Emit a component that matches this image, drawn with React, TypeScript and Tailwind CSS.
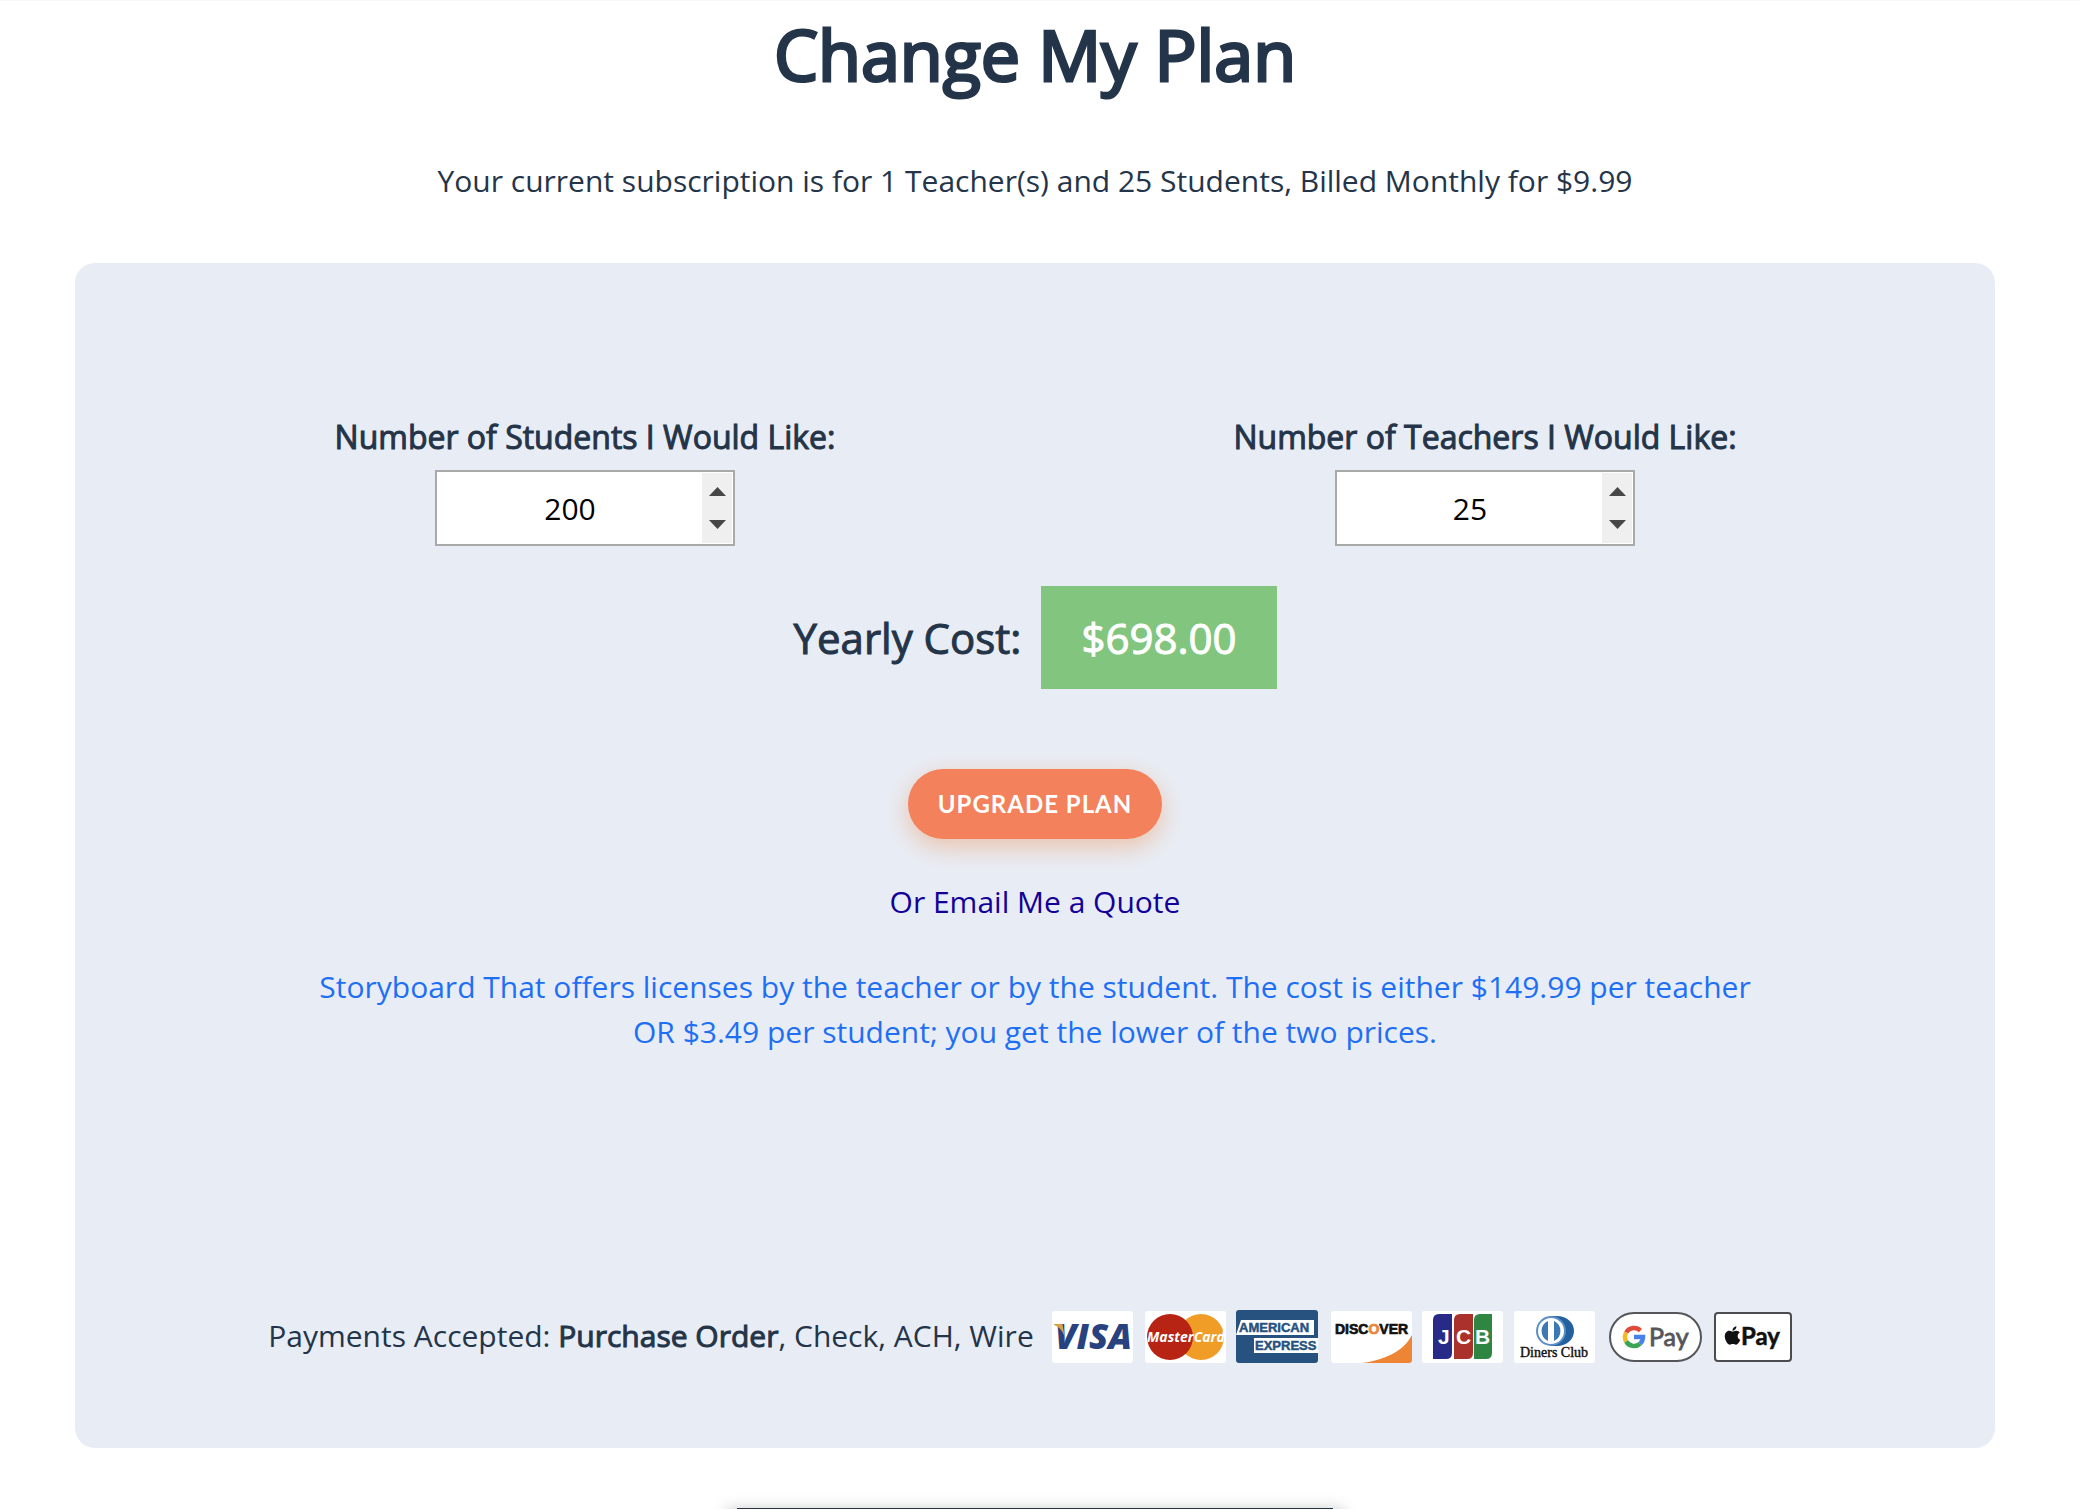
import { useState } from "react"
import { FaApple } from "react-icons/fa"

const STUDENT_PRICE = 3.49
const TEACHER_PRICE = 149.99

/** The plan costs whichever is lower: licensing by student or by teacher */
const getYearlyCost = (students: number, teachers: number) =>
  Math.min(students * STUDENT_PRICE, teachers * TEACHER_PRICE)

const NumberField = ({ id, label, value, onChange }: NumberFieldProps) => (
  <div className="flex flex-1 flex-col items-center">
    <label
      htmlFor={id}
      className="text-[32px] leading-[48px] [-webkit-text-stroke:1px_currentColor]"
    >
      {label}
    </label>
    <div className="mt-[9px] flex h-[76px] w-[300px] border-2 border-[#a9a9a9] bg-white p-px">
      <input
        id={id}
        type="number"
        min={1}
        value={value}
        onChange={e => onChange(Number(e.target.value))}
        className="min-w-0 flex-1 appearance-none bg-transparent text-center text-[30px] text-black outline-none [-moz-appearance:textfield] [&::-webkit-inner-spin-button]:appearance-none"
      />
      <div className="flex w-[30px] flex-col bg-[#efefef]">
        <button
          type="button"
          aria-label="Increase"
          onClick={() => onChange(value + 1)}
          className="flex flex-1 items-end justify-center pb-3"
        >
          <svg width="17" height="9" viewBox="0 0 17 9" fill="#474747">
            <path d="M8.500 0 17 9H0z" />
          </svg>
        </button>
        <button
          type="button"
          aria-label="Decrease"
          onClick={() => onChange(Math.max(1, value - 1))}
          className="flex flex-1 items-start justify-center pt-3"
        >
          <svg width="17" height="9" viewBox="0 0 17 9" fill="#474747">
            <path d="M0 0H17L8.500 9z" />
          </svg>
        </button>
      </div>
    </div>
  </div>
)

const PaymentLogos = () => (
  <div className="flex">
    <svg width="93" height="54" viewBox="0 0 93 54" role="img" aria-label="Visa">
      <rect y="1" width="81" height="52" rx="3" fill="#fff" />
      <text
        x="3"
        y="39"
        fontFamily="Open Sans, sans-serif"
        fontSize="35"
        fontWeight="800"
        fontStyle="italic"
        fill="#27427f"
      >
        VISA
      </text>
      <path d="M2 14h8.500l2 12C10 20 7 17 2 15z" fill="#d9a04a" />
    </svg>
    <svg width="91" height="54" viewBox="0 0 91 54" role="img" aria-label="MasterCard">
      <rect y="1" width="81" height="52" rx="3" fill="#fff" />
      <circle cx="56" cy="27" r="23" fill="#f09d28" />
      <circle cx="25" cy="27" r="23" fill="#b82414" />
      <text
        x="2"
        y="32"
        fontFamily="Open Sans, sans-serif"
        fontSize="14"
        fontWeight="700"
        fontStyle="italic"
        fill="#fff"
      >
        MasterCard
      </text>
    </svg>
    <svg width="95" height="54" viewBox="0 0 95 54" role="img" aria-label="American Express">
      <rect width="82" height="53" rx="3" fill="#27527f" />
      <path d="M5 10H78V25H0z" fill="#fff" />
      <path d="M18 28H82V43H18z" fill="#fff" />
      <g
        fontFamily="Liberation Sans, sans-serif"
        fontSize="13"
        fontWeight="700"
        fill="#27527f"
        stroke="#27527f"
        strokeWidth="0.500"
      >
        <text x="3" y="22">AMERICAN</text>
        <text x="19" y="40">EXPRESS</text>
      </g>
    </svg>
    <svg width="91" height="54" viewBox="0 0 91 54" role="img" aria-label="Discover">
      <rect y="1" width="81" height="52" rx="3" fill="#fff" />
      <path d="M81 25V50Q81 53 78 53H31C53 50 72 42 81 25z" fill="#ed8535" />
      <text
        x="4"
        y="24"
        fontFamily="Liberation Sans, sans-serif"
        fontSize="14"
        fontWeight="700"
        fill="#111"
        stroke="#111"
        strokeWidth="0.700"
      >
        DISC<tspan fill="#ed8535" stroke="#ed8535">O</tspan>VER
      </text>
    </svg>
    <svg width="92" height="54" viewBox="0 0 92 54" role="img" aria-label="JCB">
      <rect y="1" width="81" height="52" rx="3" fill="#fff" />
      <path d="M17 4H30V43Q30 49 24 49H11V10Q11 4 17 4z" fill="#272a86" />
      <path d="M38 4H51V43Q51 49 45 49H32V10Q32 4 38 4z" fill="#ab322c" />
      <path d="M58 4H70V43Q70 49 64 49H52V10Q52 4 58 4z" fill="#2f8643" />
      <g fontFamily="Liberation Sans, sans-serif" fontSize="21" fontWeight="700" fill="#fff">
        <text x="16" y="34">J</text>
        <text x="34" y="34">C</text>
        <text x="53" y="34">B</text>
      </g>
    </svg>
    <svg width="95" height="54" viewBox="0 0 95 54" role="img" aria-label="Diners Club">
      <rect y="1" width="81" height="52" rx="3" fill="#fff" />
      <path d="M37 6H42C66 6 66 36 42 36H37z" fill="#2360a0" />
      <circle cx="37" cy="21" r="14" fill="#fff" stroke="#5b8fc4" strokeWidth="2" />
      <path d="M34 11A11 11 0 0 0 34 31z M40 11A11 11 0 0 1 40 31z" fill="#3c78b5" />
      <text
        x="6"
        y="47"
        fontFamily="Liberation Serif, serif"
        fontSize="14"
        fill="#111"
        stroke="#111"
        strokeWidth="0.400"
      >
        Diners Club
      </text>
    </svg>
    <svg width="105" height="54" viewBox="0 0 105 54" role="img" aria-label="Google Pay">
      <rect x="1" y="3" width="91" height="48" rx="24" fill="#fff" stroke="#55565a" strokeWidth="2" />
      <g fill="none" strokeWidth="4.500">
        <path d="M31.400 20.600A9 9 0 0 0 17.200 22.500" stroke="#e04a3a" />
        <path d="M17.200 22.500A9 9 0 0 0 17.200 31.500" stroke="#f5ba26" />
        <path d="M17.200 31.500A9 9 0 0 0 31 33.700" stroke="#3aa556" />
        <path d="M25 27H34A9 9 0 0 1 31 33.700" stroke="#4a80ec" />
      </g>
      <text
        x="40"
        y="36"
        fontFamily="Lato, sans-serif"
        fontSize="25"
        fill="#55565a"
        stroke="#55565a"
        strokeWidth="0.800"
      >
        Pay
      </text>
    </svg>
    <svg width="78" height="54" viewBox="0 0 78 54" role="img" aria-label="Apple Pay">
      <rect x="1" y="3" width="76" height="48" rx="3" fill="#fff" stroke="#4b4b50" strokeWidth="2" />
      <FaApple size={21} x="8" y="15" color="#111" />
      <text
        x="27"
        y="35"
        fontFamily="Lato, sans-serif"
        fontSize="24"
        fontWeight="700"
        fill="#111"
        stroke="#111"
        strokeWidth="0.500"
      >
        Pay
      </text>
    </svg>
  </div>
)

export default function App() {
  const [students, setStudents] = useState(200)
  const [teachers, setTeachers] = useState(25)

  return (
    <main className="flex flex-col items-center border-t border-[#f8f8f8] bg-white pr-[85px] pl-[75px] font-['Open_Sans',sans-serif] text-[30px] leading-[45px] text-[#243449]">
      <h1 className="mt-[7px] text-[70px] leading-[92px] [-webkit-text-stroke:3px_currentColor]">
        Change My Plan
      </h1>
      <p className="mt-[58px]">
        Your current subscription is for 1 Teacher(s) and 25 Students, Billed Monthly for $9.99
      </p>

      <form
        onSubmit={e => e.preventDefault()}
        className="mt-[60px] flex w-full flex-col items-center rounded-[20px] bg-[#e8edf5] px-[60px] pt-[150px] pb-[84px]"
      >
        <div className="flex w-full">
          <NumberField
            id="students"
            label="Number of Students I Would Like:"
            value={students}
            onChange={setStudents}
          />
          <NumberField
            id="teachers"
            label="Number of Teachers I Would Like:"
            value={teachers}
            onChange={setTeachers}
          />
        </div>

        <div className="mt-10 flex items-center gap-5 text-[42px] leading-[63px] [-webkit-text-stroke:1px_currentColor]">
          <span>Yearly Cost:</span>
          <output className="bg-[#82c57e] px-10 py-5 text-white">
            ${getYearlyCost(students, teachers).toFixed(2)}
          </output>
        </div>

        <button
          type="submit"
          className="mt-20 h-[70px] rounded-full bg-[#f3815b] px-[30px] font-[Lato,sans-serif] text-2xl font-bold tracking-[1px] text-white shadow-[0_8px_24px_rgba(243,129,60,0.4)]"
        >
          UPGRADE PLAN
        </button>
        <a href="#quote" className="mt-10 text-[#120099]">
          Or Email Me a Quote
        </a>
        <p className="mt-10 max-w-[1440px] text-center text-[#1f6ff5]">
          Storyboard That offers licenses by the teacher or by the student. The cost is either
          $149.99 per teacher OR $3.49 per student; you get the lower of the two prices.
        </p>

        <div className="mt-[256px] flex items-center gap-[18px] pr-2.5">
          <p className="pb-1">
            Payments Accepted:{" "}
            <b className="font-normal [-webkit-text-stroke:1px_currentColor]">Purchase Order</b>,
            Check, ACH, Wire
          </p>
          <PaymentLogos />
        </div>
      </form>

      <div className="mt-[60px] h-px w-[596px] bg-[#243449] shadow-[0_12px_16px_10px_rgba(0,0,0,0.25)]" />
    </main>
  )
}

type NumberFieldProps = {
  id: string
  label: string
  value: number
  onChange: (value: number) => void
}
